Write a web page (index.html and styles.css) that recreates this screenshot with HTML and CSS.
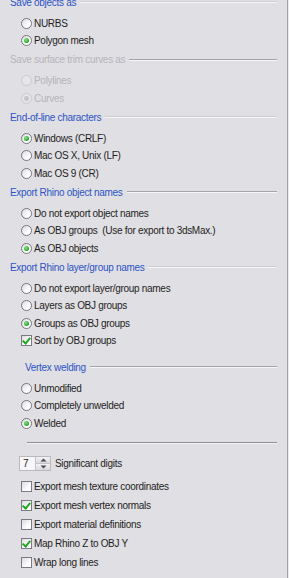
FILE: index.html
```html
<!DOCTYPE html>
<html lang="en">
<head>
    <meta charset="UTF-8">
    <meta name="viewport" content="width=device-width, initial-scale=1.0">
    <title>OBJ Export Options</title>
    <link rel="stylesheet" href="styles.css">
</head>
<body>
    <div class="panel">
        <div class="group">
            <div class="group-title"><span>Save objects as</span><span class="rule light"></span></div>
            <div class="options">
                <div class="opt"><span class="radio"></span><span>NURBS</span></div>
                <div class="opt"><span class="radio on"></span><span>Polygon mesh</span></div>
            </div>
        </div>

        <div class="group disabled">
            <div class="group-title"><span>Save surface trim curves as</span><span class="rule"></span></div>
            <div class="options">
                <div class="opt"><span class="radio"></span><span>Polylines</span></div>
                <div class="opt"><span class="radio on"></span><span>Curves</span></div>
            </div>
        </div>

        <div class="group">
            <div class="group-title"><span>End-of-line characters</span><span class="rule light"></span></div>
            <div class="options">
                <div class="opt"><span class="radio on"></span><span>Windows (CRLF)</span></div>
                <div class="opt"><span class="radio"></span><span>Mac OS X, Unix (LF)</span></div>
                <div class="opt"><span class="radio"></span><span>Mac OS 9 (CR)</span></div>
            </div>
        </div>

        <div class="group">
            <div class="group-title"><span>Export Rhino object names</span><span class="rule"></span></div>
            <div class="options">
                <div class="opt"><span class="radio"></span><span>Do not export object names</span></div>
                <div class="opt"><span class="radio"></span><span>As OBJ groups &nbsp;(Use for export to 3dsMax.)</span></div>
                <div class="opt"><span class="radio on"></span><span>As OBJ objects</span></div>
            </div>
        </div>

        <div class="group">
            <div class="group-title"><span>Export Rhino layer/group names</span><span class="rule light"></span></div>
            <div class="options">
                <div class="opt"><span class="radio"></span><span>Do not export layer/group names</span></div>
                <div class="opt"><span class="radio"></span><span>Layers as OBJ groups</span></div>
                <div class="opt"><span class="radio on"></span><span>Groups as OBJ groups</span></div>
                <div class="opt"><span class="check on"></span><span>Sort by OBJ groups</span></div>
            </div>

            <div class="subgroup">
                <div class="group-title"><span>Vertex welding</span><span class="rule"></span></div>
                <div class="options">
                    <div class="opt"><span class="radio"></span><span>Unmodified</span></div>
                    <div class="opt"><span class="radio"></span><span>Completely unwelded</span></div>
                    <div class="opt"><span class="radio on"></span><span>Welded</span></div>
                </div>
            </div>
        </div>

        <div class="separator"></div>

        <div class="spin-row">
            <div class="spinner">
                <span class="spin-field">7</span>
                <span class="spin-buttons">
                    <span class="spin-btn"><svg width="7" height="4" viewBox="0 0 7 4"><path d="M0.5 3.5 L3.5 0.5 L6.5 3.5 Z" fill="#4a4a50"/></svg></span>
                    <span class="spin-btn"><svg width="7" height="4" viewBox="0 0 7 4"><path d="M0.5 0.5 L3.5 3.5 L6.5 0.5 Z" fill="#4a4a50"/></svg></span>
                </span>
            </div>
            <span>Significant digits</span>
        </div>

        <div class="checks">
            <div class="opt"><span class="check"></span><span>Export mesh texture coordinates</span></div>
            <div class="opt"><span class="check on"></span><span>Export mesh vertex normals</span></div>
            <div class="opt"><span class="check"></span><span>Export material definitions</span></div>
            <div class="opt"><span class="check on"></span><span>Map Rhino Z to OBJ Y</span></div>
            <div class="opt"><span class="check"></span><span>Wrap long lines</span></div>
        </div>
    </div>
</body>
</html>
```

FILE: styles.css
```css
* {
    margin: 0;
    padding: 0;
    box-sizing: border-box;
}

body {
    background-color: #ebeaee;
    color: #1e1e22;
    font-family: 'Liberation Sans', Arial, sans-serif;
    font-size: 10px;
    letter-spacing: -0.3px;
    overflow: hidden;
}

.panel {
    width: 288px;
    min-height: 600px;
    margin-top: -6px;
    padding-right: 10px;
    background-color: #e0dfe3;
    border-right: 1px solid #a3a2a7;
}

.group-title {
    display: flex;
    align-items: center;
    height: 16px;
    padding-left: 10px;
    color: #2c54c6;
    white-space: nowrap;
}

.rule {
    flex: 1;
    height: 0;
    margin-left: 4px;
    border-top: 1px solid #a5a4a9;
    border-bottom: 1px solid #f6f6f8;
}

.rule.light {
    border-top-color: #cfced3;
}

.options {
    padding: 4.25px 0 2.25px 21px;
}

.opt {
    display: flex;
    align-items: center;
    gap: 2px;
    height: 17.5px;
    white-space: nowrap;
}

.radio {
    position: relative;
    width: 11px;
    height: 11px;
    border-radius: 50%;
    border: 1px solid #77767e;
    background: linear-gradient(135deg, #dcdce0, #ffffff 70%);
    flex-shrink: 0;
}

.radio.on::after {
    content: '';
    position: absolute;
    left: 2px;
    top: 2px;
    width: 5px;
    height: 5px;
    border-radius: 50%;
    background: radial-gradient(circle at 35% 35%, #8be38b, #21a521 70%);
}

.disabled .group-title,
.disabled .opt {
    color: #b6b5ba;
}

.disabled .radio {
    border-color: #cbcace;
    background: #e6e5e9;
}

.disabled .radio.on::after {
    background: #c6c5ca;
}

.check {
    position: relative;
    width: 11px;
    height: 11px;
    border: 1px solid #7b7a82;
    background: linear-gradient(135deg, #dcdce0, #ffffff 70%);
    flex-shrink: 0;
}

.check.on::after {
    content: '';
    position: absolute;
    left: 2px;
    top: 0px;
    width: 3px;
    height: 6px;
    border-right: 2px solid #22a522;
    border-bottom: 2px solid #22a522;
    transform: rotate(40deg);
}

.subgroup {
    margin-top: 7.5px;
}

.subgroup .group-title {
    padding-left: 25px;
}

.separator {
    height: 2px;
    margin: 8px 0 0 27px;
    border-top: 1px solid #8e8d92;
    border-bottom: 1px solid #f6f6f8;
}

.spin-row {
    display: flex;
    align-items: center;
    gap: 4px;
    height: 17px;
    margin-top: 11px;
    padding-left: 19px;
    white-space: nowrap;
}

.spinner {
    display: flex;
    height: 15px;
    border: 1px solid #b9b8bd;
    background-color: #f4f4f6;
}

.spin-field {
    width: 15px;
    padding-left: 3px;
    line-height: 13px;
    background-color: #f7f7f9;
}

.spin-buttons {
    display: flex;
    flex-direction: column;
    width: 15px;
    border-left: 1px solid #c4c3c8;
}

.spin-btn {
    flex: 1;
    display: flex;
    align-items: center;
    justify-content: center;
    background: linear-gradient(#f4f4f6, #d9d8dd);
    border-bottom: 1px solid #c4c3c8;
}

.spin-btn:last-child {
    border-bottom: none;
}

.checks {
    margin-top: 4.5px;
    padding-left: 21px;
}

.checks .opt {
    height: 19px;
}
```
